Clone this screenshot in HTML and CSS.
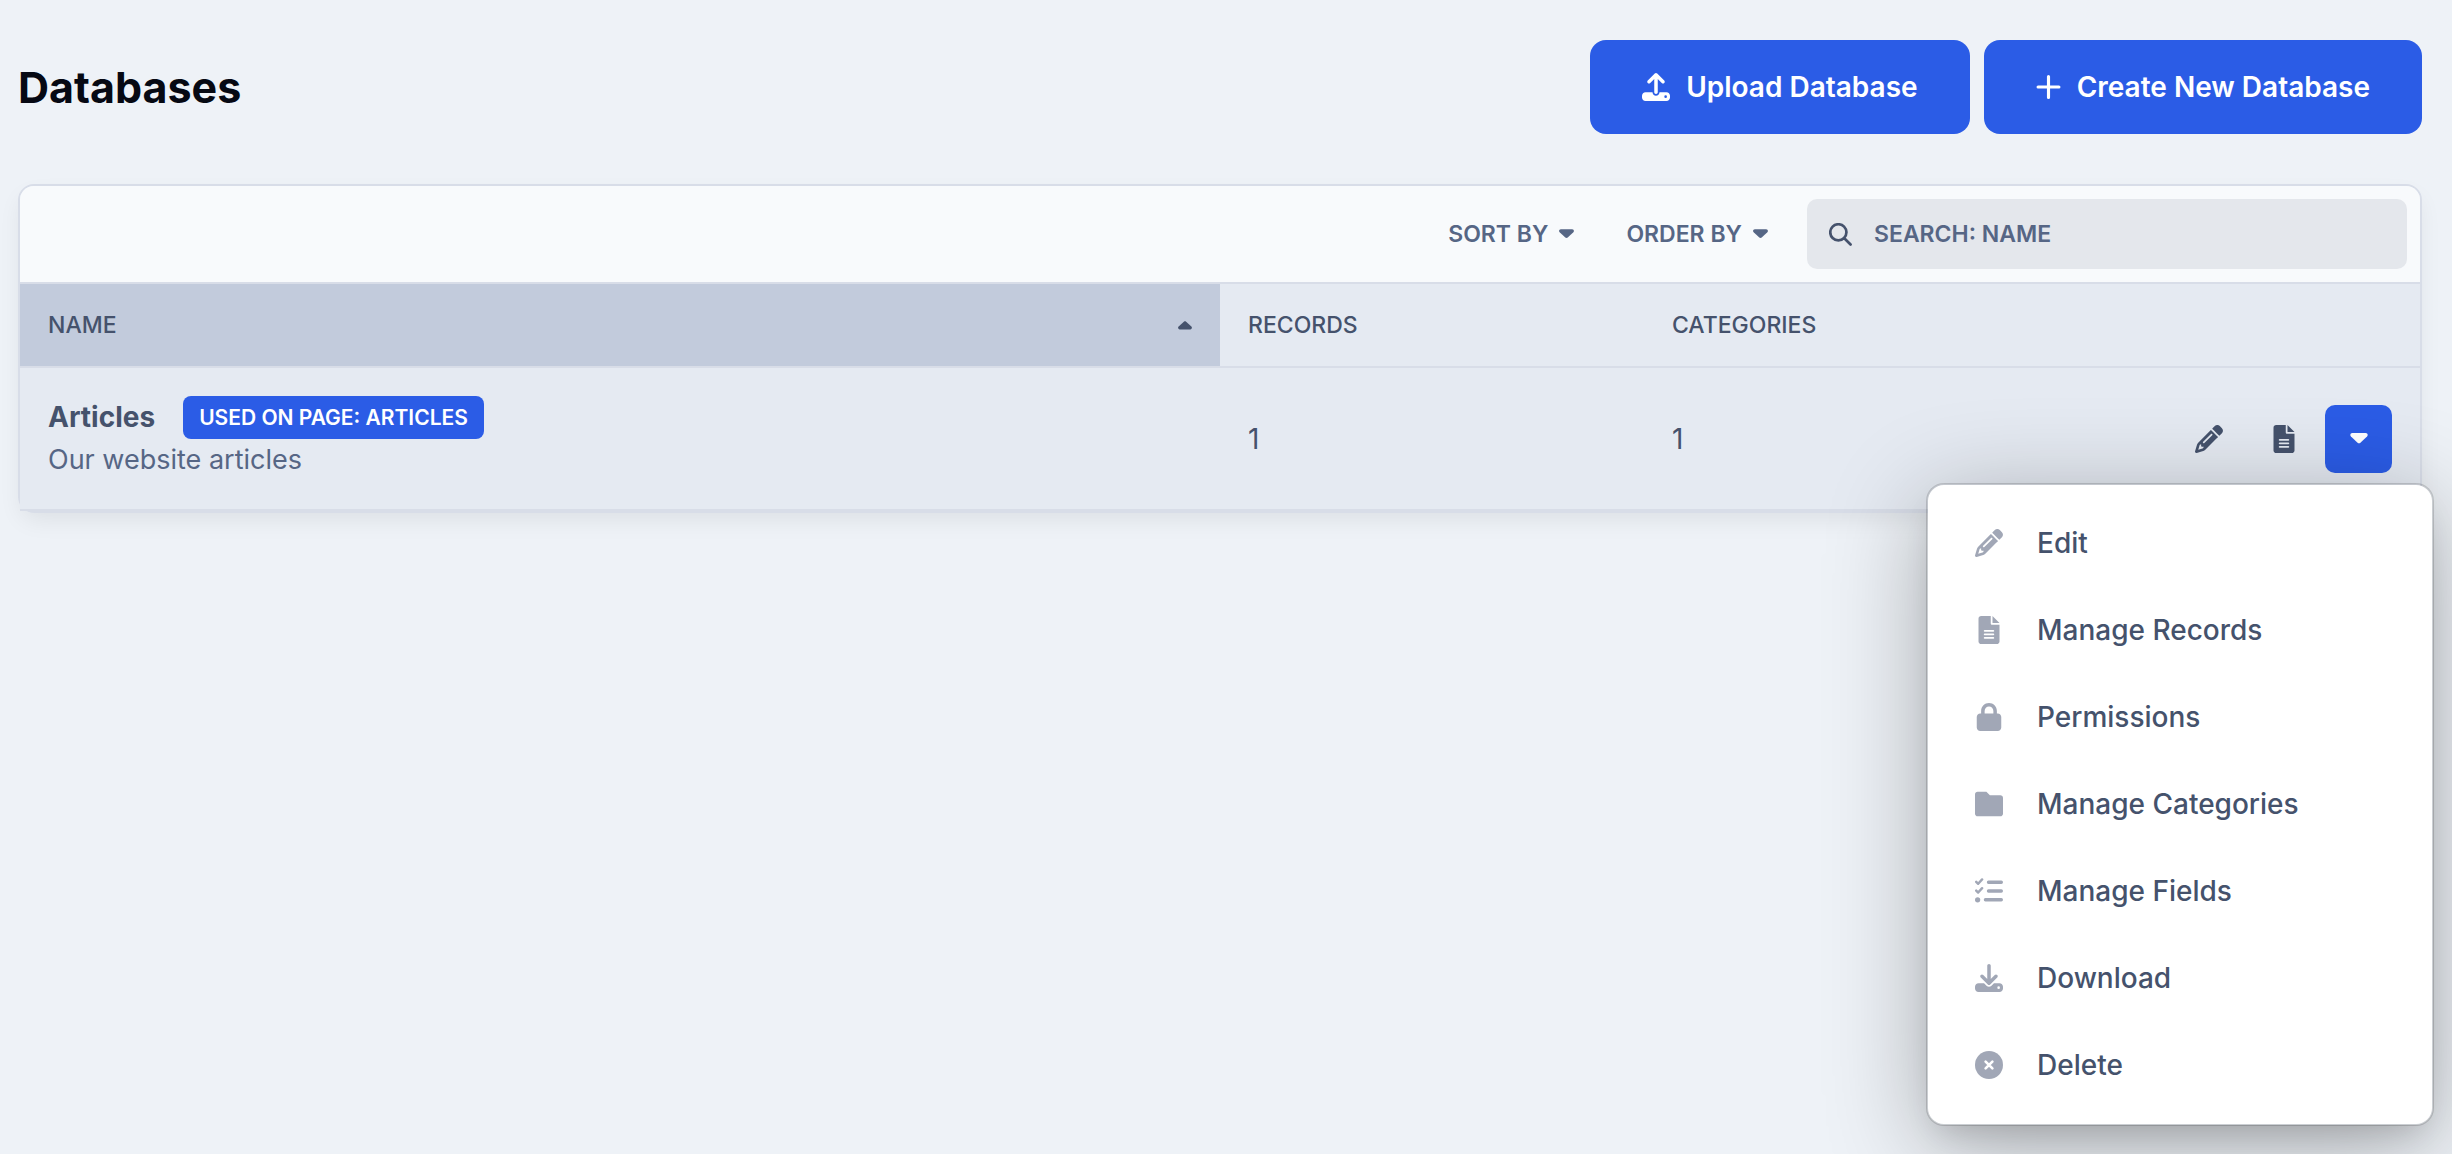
FILE: index.html
```html
<!DOCTYPE html>
<html lang="en">
<head>
    <meta charset="utf-8">
    <title>Databases</title>
    <link rel="stylesheet" href="styles.css">
</head>
<body>
    <!-- Icon definitions, referenced with <use> below -->
    <svg class="sprite" aria-hidden="true">
        <symbol id="pencil" viewBox="0 0 512 512"><path d="M410.3 231l11.3-11.3-33.9-33.9-62.1-62.1L291.7 89.8l-11.3 11.3-22.6 22.6L58.6 322.9c-10.4 10.4-18 23.3-22.2 37.4L1 480.7c-2.5 8.4-.2 17.5 6.1 23.7s15.3 8.5 23.7 6.1l120.3-35.4c14.1-4.2 27-11.8 37.4-22.2L387.7 253.7 410.3 231zM160 399.4l-9.1 22.7c-4 3.1-8.5 5.4-13.3 6.9L59.4 452l23-78.1c1.4-4.9 3.8-9.4 6.9-13.3l22.7-9.1v32c0 8.8 7.2 16 16 16h32zM362.7 18.7L348.3 33.2 325.7 55.8 314.3 67.1l33.9 33.9 62.1 62.1 33.9 33.9 11.3-11.3 22.6-22.6 14.5-14.5c25-25 25-65.5 0-90.5L453.3 18.7c-25-25-65.5-25-90.5 0zm-47.4 168l-144 144c-6.2 6.2-16.4 6.2-22.6 0s-6.2-16.4 0-22.6l144-144c6.2-6.2 16.4-6.2 22.6 0s6.2 16.4 0 22.6z"/></symbol>
        <symbol id="file" viewBox="-64 0 512 512"><path d="M224 136V0H48C21.5 0 0 21.5 0 48v416c0 26.5 21.5 48 48 48h288c26.5 0 48-21.5 48-48V160H248c-13.2 0-24-10.8-24-24zm48 280H112c-8.8 0-16-7.2-16-16s7.2-16 16-16h160c8.8 0 16 7.2 16 16s-7.2 16-16 16zm0-64H112c-8.8 0-16-7.2-16-16s7.2-16 16-16h160c8.8 0 16 7.2 16 16s-7.2 16-16 16zm0-64H112c-8.8 0-16-7.2-16-16s7.2-16 16-16h160c8.8 0 16 7.2 16 16s-7.2 16-16 16zM256 0v128h128z"/></symbol>
        <symbol id="lock" viewBox="-32 0 512 512"><path d="M144 144v48H304V144c0-44.2-35.8-80-80-80s-80 35.8-80 80zM80 192V144C80 64.5 144.5 0 224 0s144 64.5 144 144v48h16c35.3 0 64 28.7 64 64V448c0 35.3-28.7 64-64 64H64c-35.3 0-64-28.7-64-64V256c0-35.3 28.7-64 64-64H80z"/></symbol>
        <symbol id="folder" viewBox="0 0 512 512"><path d="M512 144v288c0 26.5-21.5 48-48 48H48C21.5 480 0 458.5 0 432V80C0 53.5 21.5 32 48 32h160l64 64h192C490.5 96 512 117.5 512 144z"/></symbol>
        <symbol id="fields" viewBox="0 0 512 512"><g fill="none" stroke="currentColor" stroke-width="60" stroke-linecap="round" stroke-linejoin="round"><path d="M246 96H482M246 256H482M190 416H482"/><path stroke-width="44" d="M22 88l36 36 72-80M22 248l36 36 72-80"/></g><circle cx="48" cy="416" r="48"/></symbol>
        <symbol id="download" viewBox="0 0 512 512"><path d="M288 32c0-17.7-14.3-32-32-32s-32 14.3-32 32V274.7l-73.4-73.4c-12.5-12.5-32.8-12.5-45.3 0s-12.5 32.8 0 45.3l128 128c12.5 12.5 32.8 12.5 45.3 0l128-128c12.5-12.5 12.5-32.8 0-45.3s-32.8-12.5-45.3 0L288 274.7V32zM64 352c-35.3 0-64 28.7-64 64v32c0 35.3 28.7 64 64 64H448c35.3 0 64-28.7 64-64V416c0-35.3-28.7-64-64-64H346.5l-45.3 45.3c-25 25-65.5 25-90.5 0L165.5 352H64zm368 56a24 24 0 1 1 0 48 24 24 0 1 1 0-48z"/></symbol>
        <symbol id="upload" viewBox="0 0 512 512"><path d="M288 109.3V352c0 17.7-14.3 32-32 32s-32-14.3-32-32V109.3l-73.4 73.4c-12.5 12.5-32.8 12.5-45.3 0s-12.5-32.8 0-45.3l128-128c12.5-12.5 32.8-12.5 45.3 0l128 128c12.5 12.5 12.5 32.8 0 45.3s-32.8 12.5-45.3 0L288 109.3zM64 352H192c0 35.3 28.7 64 64 64s64-28.7 64-64H448c35.3 0 64 28.7 64 64v32c0 35.3-28.7 64-64 64H64c-35.3 0-64-28.7-64-64V416c0-35.3 28.7-64 64-64zM432 456a24 24 0 1 0 0-48 24 24 0 1 0 0 48z"/></symbol>
        <symbol id="delete" viewBox="0 0 512 512"><circle cx="256" cy="256" r="256"/><path fill="none" stroke="#fff" stroke-width="48" stroke-linecap="round" d="M194 194L318 318M318 194L194 318"/></symbol>
        <symbol id="plus" viewBox="0 0 24 24"><path fill="none" stroke="currentColor" stroke-width="3" stroke-linecap="round" d="M12 2V22M2 12H22"/></symbol>
        <symbol id="search" viewBox="0 0 512 512"><path fill="none" stroke="currentColor" stroke-width="60" stroke-linecap="round" d="M340 340L480 480M388 208a180 180 0 1 1-360 0 180 180 0 1 1 360 0z"/></symbol>
        <symbol id="caret" viewBox="0 0 16 10"><path d="M2 0h12c1.8 0 2.5 2 1.3 3.2L9.3 8.8c-.8.7-1.8.7-2.6 0L.7 3.2C-.5 2 .2 0 2 0z"/></symbol>
    </svg>

    <header class="page-header">
        <h1>Databases</h1>
        <div class="page-actions">
            <button type="button" class="btn"><svg class="icon"><use href="#upload"/></svg>Upload Database</button>
            <button type="button" class="btn"><svg class="icon icon-plus"><use href="#plus"/></svg>Create New Database</button>
        </div>
    </header>

    <main class="card">
        <div class="toolbar">
            <button type="button" class="filter">Sort by <svg class="caret"><use href="#caret"/></svg></button>
            <button type="button" class="filter">Order by <svg class="caret"><use href="#caret"/></svg></button>
            <label class="search" for="search-name">
                <svg class="search-icon"><use href="#search"/></svg>
                <input type="text" id="search-name" placeholder="SEARCH: NAME" aria-label="Search by name">
            </label>
        </div>

        <table class="databases">
            <thead>
                <tr>
                    <th class="col-name sorted" aria-sort="ascending"><div class="sort-heading">Name <svg class="caret caret-up"><use href="#caret"/></svg></div></th>
                    <th class="col-records">Records</th>
                    <th class="col-categories">Categories</th>
                    <th></th>
                </tr>
            </thead>
            <tbody>
                <tr>
                    <td>
                        <div class="name-line"><strong>Articles</strong><span class="badge">Used on page: Articles</span></div>
                        <div class="description">Our website articles</div>
                    </td>
                    <td>1</td>
                    <td>1</td>
                    <td>
                        <div class="row-actions">
                            <button type="button" class="row-btn" aria-label="Edit"><svg class="icon"><use href="#pencil"/></svg></button>
                            <button type="button" class="row-btn" aria-label="Manage Records"><svg class="icon"><use href="#file"/></svg></button>
                            <button type="button" class="row-btn open" aria-label="More options" aria-expanded="true"><svg class="caret caret-menu"><use href="#caret"/></svg></button>
                            <nav class="menu">
                                <a href="#edit"><svg class="icon"><use href="#pencil"/></svg>Edit</a>
                                <a href="#records"><svg class="icon"><use href="#file"/></svg>Manage Records</a>
                                <a href="#permissions"><svg class="icon"><use href="#lock"/></svg>Permissions</a>
                                <a href="#categories"><svg class="icon"><use href="#folder"/></svg>Manage Categories</a>
                                <a href="#fields"><svg class="icon"><use href="#fields"/></svg>Manage Fields</a>
                                <a href="#download"><svg class="icon"><use href="#download"/></svg>Download</a>
                                <a href="#delete"><svg class="icon"><use href="#delete"/></svg>Delete</a>
                            </nav>
                        </div>
                    </td>
                </tr>
            </tbody>
        </table>
    </main>
</body>
</html>
```
FILE: styles.css
```css
* {
    box-sizing: border-box;
}
body {
    min-height: 100vh;
    margin: 0;
    padding: 40px 30px 24px 18px;
    background-color: #eef2f7;
    color: #45526c;
    font-family: Inter, "Liberation Sans", sans-serif;
    font-size: 28px;
    line-height: 42px;
}
button, input {
    font: inherit;
    border: none;
}
button {
    cursor: pointer;
}
svg {
    display: block;
    flex: none;
    fill: currentColor;
}
.sprite {
    position: absolute;
    width: 0;
    height: 0;
}
.icon {
    width: 28px;
    height: 28px;
}
.icon-plus {
    width: 25px;
}
.caret {
    width: 15px;
    height: 10px;
}
.caret-up {
    width: 14px;
    transform: rotate(180deg);
}
.caret-menu {
    width: 18px;
    height: 11px;
}

/* Title and main buttons */
.page-header {
    display: flex;
    align-items: center;
    justify-content: space-between;
    margin-bottom: 50px;
}
h1 {
    margin: 0;
    color: #060913;
    font-size: 43px;
    font-weight: 700;
}
.page-actions {
    display: flex;
    gap: 14px;
}
.btn {
    display: flex;
    align-items: center;
    gap: 16px;
    padding: 26px 52px;
    border-radius: 16px;
    background-color: #2b5ce6;
    color: #fff;
    font-weight: 600;
}

/* Card */
.card {
    border: 2px solid #d8dde8;
    border-radius: 16px;
    box-shadow: 0 10px 24px -4px rgba(0, 0, 0, 0.08);
}
.toolbar {
    display: flex;
    align-items: center;
    justify-content: flex-end;
    padding: 13px;
    border-radius: 14px 14px 0 0;
    background-color: #f8fafc;
}
.filter {
    display: flex;
    align-items: center;
    gap: 11px;
    margin-right: 39px;
    padding: 0 0 0 13px;
    background: none;
    color: #566685;
    font-size: 23px;
    font-weight: 600;
    text-transform: uppercase;
}
.search {
    display: flex;
    align-items: center;
    gap: 22px;
    width: 600px;
    height: 70px;
    padding: 0 22px;
    border-radius: 10px;
    background-color: #e4e7ec;
}
.search-icon {
    width: 23px;
    height: 23px;
}
.search input {
    flex: 1;
    min-width: 0;
    padding: 0;
    outline: none;
    background: none;
    color: #45526c;
    font-size: 23px;
    font-weight: 600;
}
.search input::placeholder {
    color: #566685;
    opacity: 1;
}

/* Table of databases */
.databases {
    width: 100%;
    table-layout: fixed;
    border-spacing: 0;
    background-color: #e5eaf2;
}
th {
    padding: 20px 28px;
    border-top: 2px solid #d8dde8;
    border-bottom: 2px solid #d8dde8;
    font-size: 23px;
    font-weight: 500;
    text-align: left;
    text-transform: uppercase;
}
td {
    padding: 28px;
    border-bottom: 2px solid #d8dde8;
}
.col-name {
    width: 50%;
}
.col-records, .col-categories {
    width: 424px;
}
.sorted {
    background-color: #c2cbdc;
}
.sort-heading {
    display: flex;
    align-items: center;
    justify-content: space-between;
}
.name-line {
    display: flex;
    align-items: center;
    gap: 28px;
    line-height: 43px;
}
.name-line strong {
    font-weight: 700;
}
.badge {
    padding: 0 16px;
    border-radius: 8px;
    background-color: #2b5ce6;
    color: #fff;
    font-size: 21px;
    font-weight: 600;
    text-transform: uppercase;
}
.description {
    color: #566685;
    font-size: 27px;
}
.row-actions {
    position: relative;
    display: flex;
    justify-content: flex-end;
    gap: 8px;
}
.row-btn {
    display: flex;
    align-items: center;
    justify-content: center;
    width: 67px;
    height: 68px;
    padding: 0;
    border-radius: 10px;
    background: none;
    color: #45526c;
}
.row-btn.open {
    background-color: #2b5ce6;
    color: #fff;
}

/* Drop-down menu of a row */
.menu {
    position: absolute;
    z-index: 1;
    top: 100%;
    right: -42px;
    width: 508px;
    margin-top: 10px;
    padding: 15px 0;
    border: 2px solid rgba(0, 0, 0, 0.15);
    border-radius: 18px;
    background-color: #fff;
    background-clip: padding-box;
    box-shadow: 0 20px 100px rgba(0, 0, 0, 0.3), 0 16px 32px -12px rgba(0, 0, 0, 0.15);
}
.menu a {
    display: flex;
    align-items: center;
    gap: 34px;
    height: 87px;
    padding: 0 47px;
    color: #45526c;
    font-weight: 500;
    text-decoration: none;
}
.menu .icon {
    color: #a1a7b6;
}
```
